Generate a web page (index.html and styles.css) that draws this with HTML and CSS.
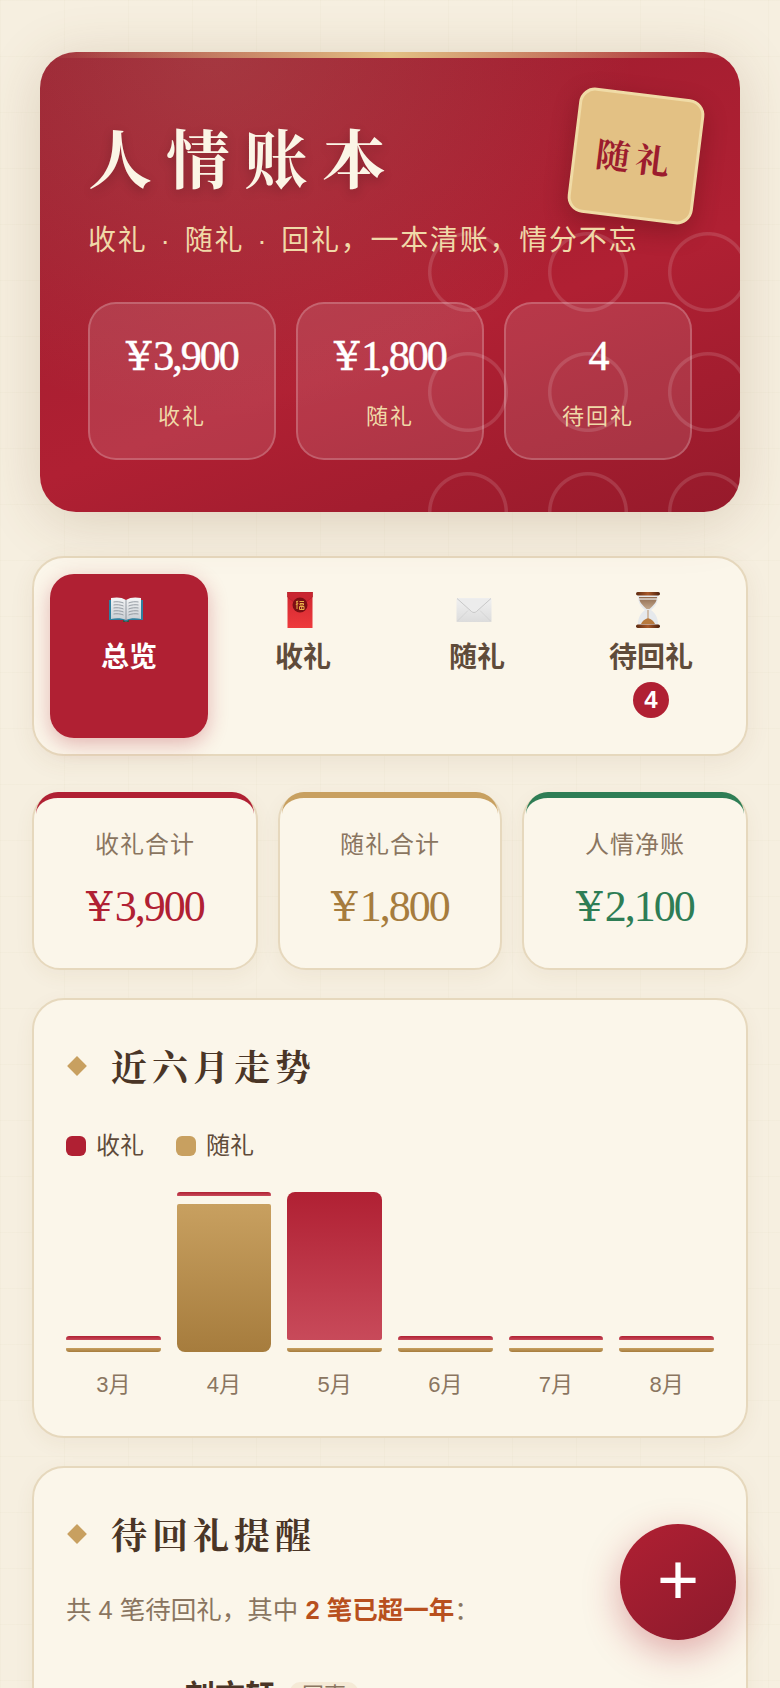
FILE: index.html
```html
<!DOCTYPE html>
<html lang="zh-CN">
<head>
<meta charset="utf-8">
<title>人情账本</title>
<link rel="stylesheet" href="styles.css">
</head>
<body>
<main class="app">
  <header class="hero">
    <div class="hero-rings"></div>
    <div class="hero-seal"><span>随礼</span></div>
    <h1 class="hero-title">人情账本</h1>
    <p class="hero-sub">收礼 · 随礼 · 回礼，一本清账，情分不忘</p>
    <div class="hero-stats">
      <div class="hero-stat"><div class="hero-num"><span class="yen">¥</span>3,900</div><div class="hero-label">收礼</div></div>
      <div class="hero-stat"><div class="hero-num"><span class="yen">¥</span>1,800</div><div class="hero-label">随礼</div></div>
      <div class="hero-stat"><div class="hero-num">4</div><div class="hero-label">待回礼</div></div>
    </div>
  </header>

  <nav class="tabs">
    <div class="tab active">
      <span class="tab-icon">
        <svg width="36" height="36" viewBox="0 0 36 36">
          <defs><linearGradient id="pg" x1="0" y1="0" x2="0" y2="1"><stop offset="0" stop-color="#f4f5f6"/><stop offset="1" stop-color="#c9ced3"/></linearGradient></defs>
          <path d="M1 8h34v20H21l-3 2-3-2H1z" fill="#2f7f9e"/>
          <path d="M3 6c5-1 11-1 15 2v20c-4-2-10-2-15-1z" fill="url(#pg)"/>
          <path d="M33 6c-5-1-11-1-15 2v20c4-2 10-2 15-1z" fill="url(#pg)"/>
          <path d="M5.500 10c3-.5 7-.3 10 1M5.500 13c3-.5 7-.3 10 1M5.500 16c3-.5 7-.3 10 1M5.500 19c3-.5 7-.3 10 1M5.500 22c3-.5 7-.3 10 1M30.500 10c-3-.5-7-.3-10 1M30.500 13c-3-.5-7-.3-10 1M30.500 16c-3-.5-7-.3-10 1M30.500 19c-3-.5-7-.3-10 1M30.500 22c-3-.5-7-.3-10 1" fill="none" stroke="#8b939b" stroke-width=".9"/>
          <path d="M18 8v20" stroke="#7d8790" stroke-width=".8"/>
          <path d="M15 28l3 2 3-2v2h-6z" fill="#2d5a3d"/>
        </svg>
      </span>
      <span class="tab-text">总览</span>
    </div>
    <div class="tab">
      <span class="tab-icon">
        <svg width="36" height="36" viewBox="0 0 36 36">
          <defs><linearGradient id="rp" x1="0" y1="0" x2="0" y2="1"><stop offset="0" stop-color="#cf2630"/><stop offset="1" stop-color="#ee3a3c"/></linearGradient></defs>
          <rect x="5.500" y="0" width="25" height="36" fill="url(#rp)"/>
          <path d="M5.500 0h25v5l-12.500 10-12.500-10z" fill="#c92530" stroke="#a81c26" stroke-width=".5"/>
          <circle cx="18" cy="13" r="7.500" fill="#7c0f14"/>
          <path d="M14 10l2.200-1M15 9v8M13.800 12.500l2.500-1M17.500 9.500h4.500M18 11.500h3.500v1.500H18zM17.500 14.500h4.500v3h-4.500zM19.700 14.500v3" stroke="#eab04a" stroke-width="1" fill="none"/>
        </svg>
      </span>
      <span class="tab-text">收礼</span>
    </div>
    <div class="tab">
      <span class="tab-icon">
        <svg width="36" height="36" viewBox="0 0 36 36">
          <defs><linearGradient id="ev" x1="0" y1="0" x2="0" y2="1"><stop offset="0" stop-color="#f1f1f1"/><stop offset="1" stop-color="#dcdcdc"/></linearGradient></defs>
          <rect x=".5" y="6" width="35" height="24" rx="1.500" fill="url(#ev)"/>
          <path d="M1 6.500l14.500 13c1.500 1.300 3.500 1.300 5 0L35 6.500" fill="#ececec" stroke="#c4c4c4" stroke-width=".9"/>
          <path d="M1 29.500l11-11M35 29.500l-11-11" stroke="#cfcfcf" stroke-width=".7"/>
        </svg>
      </span>
      <span class="tab-text">随礼</span>
    </div>
    <div class="tab">
      <span class="tab-icon">
        <svg width="36" height="36" viewBox="0 0 36 36">
          <defs>
            <linearGradient id="wd" x1="0" y1="0" x2="1" y2="0"><stop offset="0" stop-color="#5e2a10"/><stop offset=".5" stop-color="#a8592a"/><stop offset="1" stop-color="#4a1f0b"/></linearGradient>
            <linearGradient id="sd" x1="0" y1="0" x2="0" y2="1"><stop offset="0" stop-color="#8f6a4e"/><stop offset="1" stop-color="#c2a78c"/></linearGradient>
          </defs>
          <path d="M8 3h20c0 6-1 10-7 15 6 5 7 9 7 15H8c0-6 1-10 7-15-6-5-7-9-7-15z" fill="#e6e9ec"/>
          <path d="M9 5h18c0 4-2 7-7.500 12h-3C11 12 9 9 9 5z" fill="url(#sd)"/>
          <path d="M9 7h18" stroke="#f2f2f2" stroke-width="1.200"/>
          <path d="M11 32c1-3 4-5 7-6 3 1 6 3 7 6z" fill="#b87a3e"/>
          <path d="M18 18v8" stroke="#b98f66" stroke-width="1"/>
          <rect x="6" y="0" width="24" height="3.500" rx="1.700" fill="url(#wd)"/>
          <rect x="6" y="32.500" width="24" height="3.500" rx="1.700" fill="url(#wd)"/>
        </svg>
      </span>
      <span class="tab-text">待回礼</span>
      <span class="tab-badge">4</span>
    </div>
  </nav>

  <section class="summary">
    <div class="sum-card red"><div class="sum-label">收礼合计</div><div class="sum-num"><span class="yen">¥</span>3,900</div></div>
    <div class="sum-card gold"><div class="sum-label">随礼合计</div><div class="sum-num"><span class="yen">¥</span>1,800</div></div>
    <div class="sum-card green"><div class="sum-label">人情净账</div><div class="sum-num"><span class="yen">¥</span>2,100</div></div>
  </section>

  <section class="panel chart-panel">
    <h2 class="panel-title">近六月走势</h2>
    <div class="legend">
      <span class="legend-item"><i class="swatch in"></i>收礼</span>
      <span class="legend-item"><i class="swatch out"></i>随礼</span>
    </div>
    <div class="chart">
      <div class="col"><div class="bars"><div class="bar in thin"></div><div class="bar out thin"></div></div><div class="month">3月</div></div>
      <div class="col"><div class="bars"><div class="bar in thin"></div><div class="bar out tall"></div></div><div class="month">4月</div></div>
      <div class="col"><div class="bars"><div class="bar in tall"></div><div class="bar out thin"></div></div><div class="month">5月</div></div>
      <div class="col"><div class="bars"><div class="bar in thin"></div><div class="bar out thin"></div></div><div class="month">6月</div></div>
      <div class="col"><div class="bars"><div class="bar in thin"></div><div class="bar out thin"></div></div><div class="month">7月</div></div>
      <div class="col"><div class="bars"><div class="bar in thin"></div><div class="bar out thin"></div></div><div class="month">8月</div></div>
    </div>
  </section>

  <section class="panel">
    <h2 class="panel-title">待回礼提醒</h2>
    <p class="remind">共 4 笔待回礼，其中 <strong>2 笔已超一年</strong>：</p>
    <div class="person"><span class="person-name">刘文轩</span><span class="person-tag">同事</span></div>
  </section>
</main>
<button class="fab" type="button">+</button>
</body>
</html>
```
FILE: styles.css
```css
* { box-sizing: border-box; }
html, body { margin: 0; height: 1688px; overflow: hidden; }
body {
  font-family: "Liberation Sans", "Noto Sans CJK SC", sans-serif;
  color: #4a3526;
  background-color: #f6efe0;
  background-image:
    linear-gradient(rgba(160,130,90,.03) 1px, transparent 1px),
    linear-gradient(90deg, rgba(160,130,90,.03) 1px, transparent 1px);
  background-size: 64px 56px;
}
.app { padding: 52px 32px 0; display: flex; flex-direction: column; }
.yen { font-family: "DejaVu Serif", serif; font-weight: 400; font-size: .94em; line-height: 0; margin-right: 2px; letter-spacing: 0; }

.hero {
  position: relative;
  margin: 0 8px;
  height: 460px;
  padding: 65px 48px 0;
  border-radius: 36px;
  overflow: hidden;
  color: #fff;
  background:
    radial-gradient(ellipse 60% 80% at 25% 0%, rgba(200,190,150,.17), transparent 100%),
    linear-gradient(160deg, #9a1c2e 0%, #b02033 60%, #961a2b 100%);
  box-shadow: 0 8px 56px rgba(120,80,40,.2);
}
.hero::before {
  content: "";
  position: absolute;
  left: 0; right: 0; top: 0;
  height: 6px;
  background: linear-gradient(90deg, transparent, #e3c184, transparent);
}
.hero-rings {
  position: absolute;
  left: 388px; top: 180px; right: 0; bottom: 0;
  background-image: radial-gradient(circle at 40px 40px, transparent 36px, rgba(255,255,255,.13) 37px, rgba(255,255,255,.13) 39.5px, transparent 40.5px);
  background-size: 120px 120px;
}
.hero-seal {
  position: absolute;
  right: 41px; top: 41px;
  width: 126px; height: 126px;
  display: flex; align-items: center; justify-content: center;
  transform: rotate(7deg);
  background: #e3c184;
  border: 3px solid #f0dba6;
  border-radius: 16px;
  box-shadow: 0 8px 24px rgba(60,10,10,.3);
  color: #9c1c2e;
  font-family: "Noto Serif CJK SC", serif;
  font-size: 34px;
  font-weight: 700;
  letter-spacing: 6px;
}
.hero-title {
  position: relative;
  margin: 0;
  font-family: "Noto Serif CJK SC", serif;
  font-size: 64px;
  line-height: 76px;
  font-weight: 700;
  letter-spacing: 14px;
  color: #fbf5e6;
  text-shadow: 0 4px 12px rgba(0,0,0,.2);
}
.hero-sub {
  position: relative;
  margin: 27px 0 0;
  font-size: 28px;
  line-height: 42px;
  letter-spacing: 1.75px;
  word-spacing: 3.5px;
  color: #f0d9a8;
}
.hero-stats {
  position: absolute;
  left: 48px; right: 48px; top: 250px;
  display: grid;
  grid-template-columns: repeat(3, 1fr);
  gap: 20px;
}
.hero-stat {
  height: 158px;
  padding-top: 24px;
  text-align: center;
  border: 2px solid rgba(255,255,255,.2);
  border-radius: 28px;
  background: rgba(255,255,255,.11);
}
.hero-num {
  font-family: "Liberation Serif", serif;
  font-size: 42px;
  line-height: 56px;
  letter-spacing: -2px;
  color: #fff;
  -webkit-text-stroke: .5px #fff;
}
.hero-label {
  margin-top: 16px;
  font-size: 22px;
  line-height: 34px;
  letter-spacing: 2px;
  color: #f0d9a8;
}

.tabs {
  margin-top: 44px;
  height: 200px;
  padding: 16px;
  display: grid;
  grid-template-columns: repeat(4, 1fr);
  gap: 16px;
  background: #fbf6ea;
  border: 2px solid #e6d8bd;
  border-radius: 32px;
  box-shadow: 0 6px 24px rgba(120,80,40,.08);
}
.tab {
  display: flex;
  flex-direction: column;
  align-items: center;
  padding-top: 18px;
  border-radius: 24px;
  color: #5f4b3a;
  font-size: 28px;
  font-weight: 700;
}
.tab.active {
  background: #b02033;
  color: #fff;
  box-shadow: 0 6px 20px rgba(176,32,51,.3);
}
.tab-icon { display: flex; width: 36px; height: 36px; margin-right: 6px; }
.tab-text { margin-top: 6px; line-height: 42px; font-family: "Noto Sans CJK SC", sans-serif; }
.tab-badge {
  width: 36px; height: 36px;
  margin-top: 6px;
  display: flex; align-items: center; justify-content: center;
  border-radius: 50%;
  background: #b02033;
  color: #fff;
  font-family: "Liberation Sans", sans-serif;
  font-size: 24px;
}

.summary {
  margin-top: 36px;
  display: grid;
  grid-template-columns: 226px 224px 226px;
  gap: 20px;
}
.sum-card {
  position: relative;
  height: 178px;
  padding-top: 34px;
  text-align: center;
  background: #fbf6ea;
  border: 2px solid #e6d8bd;
  border-radius: 28px;
  box-shadow: 0 6px 20px rgba(120,80,40,.06);
}
.sum-card::before {
  content: "";
  position: absolute;
  left: 2px; right: 2px; top: -2px;
  height: 16px;
  border-top: 6px solid var(--accent);
  border-radius: 26px 26px 0 0;
}
.sum-card.red { --accent: #b02033; }
.sum-card.gold { --accent: #c8a060; }
.sum-card.green { --accent: #2e7d55; }
.sum-label { font-size: 24px; line-height: 34px; color: #8a7560; letter-spacing: 1px; }
.sum-num {
  margin-top: 16px;
  font-family: "Liberation Serif", serif;
  font-size: 44px;
  line-height: 58px;
  letter-spacing: -2px;
}
.red .sum-num { color: #b02033; }
.gold .sum-num { color: #a67c3d; }
.green .sum-num { color: #2e7d55; }

.panel {
  margin-top: 28px;
  padding: 34px 32px 35px;
  background: #fbf6ea;
  border: 2px solid #e6d8bd;
  border-radius: 32px;
  box-shadow: 0 6px 20px rgba(120,80,40,.06);
}
.panel-title {
  margin: 0;
  display: flex;
  align-items: center;
  font-family: "Noto Serif CJK SC", serif;
  font-size: 36px;
  line-height: 64px;
  font-weight: 700;
  letter-spacing: 5px;
  color: #4a3526;
}
.panel-title::before {
  content: "";
  width: 14px; height: 14px;
  margin: 0 27px 0 4px;
  background: #c8a060;
  transform: rotate(45deg);
}
.legend { margin-top: 30px; display: flex; gap: 32px; }
.legend-item { display: flex; align-items: center; gap: 10px; font-size: 24px; line-height: 36px; color: #5f4b3a; }
.swatch { width: 20px; height: 20px; border-radius: 6px; }
.swatch.in { background: #b02033; }
.swatch.out { background: #c8a060; }

.chart { margin-top: 28px; display: grid; grid-template-columns: repeat(6, 1fr); gap: 16px; }
.col { display: flex; flex-direction: column; }
.bars { height: 160px; display: flex; flex-direction: column; justify-content: flex-end; gap: 8px; }
.bar.thin { height: 4px; }
.bar.tall { height: 148px; }
.bar.in { background: linear-gradient(180deg, #b02033, #c84a5a); border-radius: 8px 8px 2px 2px; }
.bar.out { background: linear-gradient(180deg, #c8a060, #a67c3d); border-radius: 2px 2px 8px 8px; }
.month { margin-top: 17px; text-align: center; font-size: 22px; line-height: 32px; color: #8a7560; }

.remind { margin: 22px 0 0; font-size: 25.5px; line-height: 44px; color: #8a7560; }
.remind strong { color: #b8501e; }
.person { margin-top: 42px; padding-left: 119px; display: flex; align-items: center; gap: 15px; }
.person-name { font-size: 30px; line-height: 44px; font-weight: 700; color: #4a3526; }
.person-tag { padding: 0 12px; border-radius: 10px; background: #f5ead6; color: #8a7560; font-size: 22px; line-height: 28px; }

.fab {
  position: fixed;
  right: 44px; bottom: 48px;
  width: 116px; height: 116px;
  padding: 0 0 6px;
  border: 0;
  border-radius: 50%;
  background: linear-gradient(145deg, #b02033, #8c1a2c);
  box-shadow: 0 12px 36px rgba(176,32,51,.35);
  color: #fff;
  font-family: "Liberation Sans", sans-serif;
  font-size: 72px;
  line-height: 1;
}
```
